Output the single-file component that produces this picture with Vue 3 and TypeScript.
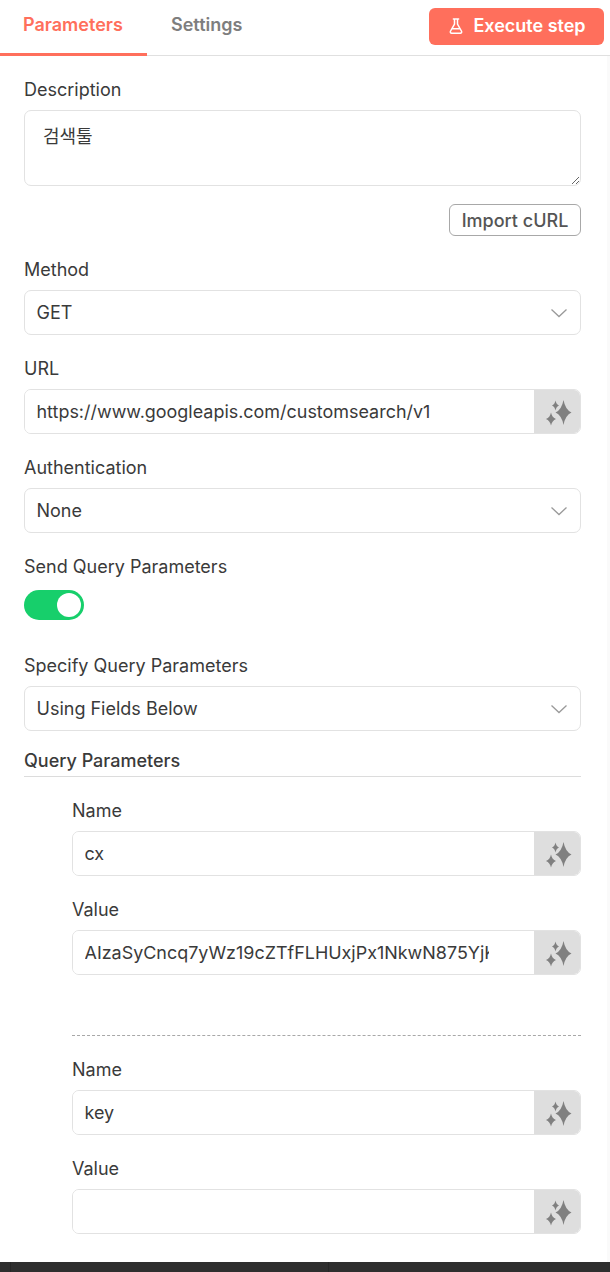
<script setup lang="ts">
interface Param {
  name: string
  value: string
}

const params: Param[] = [
  { name: 'cx', value: 'AIzaSyCncq7yWz19cZTfFLHUxjPx1NkwN875YjKlmQ8' },
  { name: 'key', value: '' },
]

const sparkle =
  'M24 4.500Q25.800 14.200 32 17Q25.800 19.800 24 29.500Q22.200 19.800 16 17Q22.200 14.200 24 4.500ZM16 5Q16.800 9 19.500 10Q16.800 11 16 15Q15.200 11 12.500 10Q15.200 9 16 5ZM11.500 17Q12.600 22 16.500 23.500Q12.600 25 11.500 30Q10.400 25 6.500 23.500Q10.400 22 11.500 17Z'
</script>

<template>
  <div class="page">
    <header class="tabs">
      <div class="tab tab_active">Parameters</div>
      <div class="tab">Settings</div>
      <button class="execute">
        <svg width="18" height="18" viewBox="0 0 24 24" fill="none" stroke="#fff" stroke-width="2" stroke-linecap="round" stroke-linejoin="round">
          <path d="M8.500 2.500h7M10 2.500v7L4.600 19a1.700 1.700 0 0 0 1.500 2.500h11.800a1.700 1.700 0 0 0 1.500-2.500L14 9.500v-7M7 15.500h10" />
        </svg>
        Execute step
      </button>
    </header>

    <main class="body">
      <div class="form">
        <label class="label">Description</label>
        <textarea class="area" readonly>검색툴</textarea>
        <div class="curl_row"><button class="curl">Import cURL</button></div>

        <label class="label next">Method</label>
        <div class="select">GET
          <svg class="chev" width="18" height="10" viewBox="0 0 18 10" fill="none" stroke="#9a9a9a" stroke-width="1.300"><path d="M1.500 1.500 9 8.500l7.500-7" /></svg>
        </div>

        <label class="label next">URL</label>
        <div class="field">
          <input class="input" readonly value="https://www.googleapis.com/customsearch/v1" />
          <div class="magic"><svg width="32" height="32" viewBox="1.500 0.500 32 32" fill="#808080"><path :d="sparkle" /></svg></div>
        </div>

        <label class="label next">Authentication</label>
        <div class="select">None
          <svg class="chev" width="18" height="10" viewBox="0 0 18 10" fill="none" stroke="#9a9a9a" stroke-width="1.300"><path d="M1.500 1.500 9 8.500l7.500-7" /></svg>
        </div>

        <label class="label next">Send Query Parameters</label>
        <div class="toggle"><span class="knob"></span></div>

        <label class="label specify">Specify Query Parameters</label>
        <div class="select">Using Fields Below
          <svg class="chev" width="18" height="10" viewBox="0 0 18 10" fill="none" stroke="#9a9a9a" stroke-width="1.300"><path d="M1.500 1.500 9 8.500l7.500-7" /></svg>
        </div>

        <div class="section">Query Parameters</div>

        <div class="params">
          <div v-for="(p, i) in params" :key="p.name" class="param" :class="{ param_next: i > 0 }">
            <label class="label">Name</label>
            <div class="field">
              <input class="input" readonly :value="p.name" />
              <div class="magic"><svg width="32" height="32" viewBox="1.500 0.500 32 32" fill="#808080"><path :d="sparkle" /></svg></div>
            </div>
            <label class="label next">Value</label>
            <div class="field">
              <input class="input" readonly :value="p.value" />
              <div class="magic"><svg width="32" height="32" viewBox="1.500 0.500 32 32" fill="#808080"><path :d="sparkle" /></svg></div>
            </div>
          </div>
        </div>
      </div>
      <div class="scroll"></div>
    </main>

    <footer class="footer">
      <div class="foot_a"></div>
      <div class="foot_b"></div>
    </footer>
  </div>
</template>

<style scoped>
.page {
  width: 610px;
  height: 1272px;
  display: flex;
  flex-direction: column;
  font-family: Inter, "Noto Sans CJK KR", sans-serif;
  font-size: 18px;
  color: #3a3a3a;
  background: #fff;
  overflow: hidden;
}
.tabs {
  height: 55px;
  flex: none;
  display: flex;
  border-bottom: 1px solid #e0e0e0;
}
.tab {
  box-sizing: border-box;
  padding: 14px 0 0 24px;
  font-weight: 600;
  font-size: 18px;
  line-height: 21px;
  color: #7e7e7e;
  flex: 1;
}
.tab_active {
  flex: none;
  width: 147px;
  padding-left: 23px;
  height: 56px;
  color: #ff6f5c;
  border-bottom: 3px solid #ff6f5c;
}
.execute {
  align-self: flex-start;
  margin: 8px 6px 0 0;
  width: 175px;
  height: 37px;
  border: none;
  border-radius: 6px;
  background: #ff6f5c;
  color: #fff;
  font: 600 18px Inter, sans-serif;
  display: flex;
  align-items: center;
  justify-content: center;
  gap: 8px;
  padding: 0 0 2px;
}
.body {
  flex: 1;
  display: flex;
  min-height: 0;
}
.form {
  width: 557px;
  margin-left: 24px;
  padding-top: 23px;
}
.scroll {
  width: 3px;
  margin-left: 26px;
  background: #fafafa;
}
.label {
  display: block;
  height: 21px;
  line-height: 21px;
  margin-bottom: 10px;
  font-size: 18px;
}
.next {
  margin-top: 23px;
}
.specify {
  margin-top: 35px;
}
.area {
  display: block;
  width: 100%;
  height: 76px;
  box-sizing: border-box;
  padding: 11px 18px;
  border: 1.500px solid #e2e2e2;
  border-radius: 7px;
  font: 18px Inter, "Noto Sans CJK KR", sans-serif;
  color: #3a3a3a;
  outline: none;
}
.curl_row {
  display: flex;
  justify-content: flex-end;
  margin-top: 18px;
}
.curl {
  width: 132px;
  height: 32px;
  border: 1px solid #a8a8a8;
  border-radius: 6px;
  background: #fff;
  color: #555;
  font: 500 18px Inter, sans-serif;
  padding: 0;
}
.select {
  height: 45px;
  box-sizing: border-box;
  display: flex;
  align-items: center;
  justify-content: space-between;
  padding: 0 12px 0 11.500px;
  border: 1.500px solid #e2e2e2;
  border-radius: 7px;
}
.chev {
  flex: none;
}
.field {
  height: 45px;
  display: flex;
  box-sizing: border-box;
  border: 1.500px solid #e2e2e2;
  border-radius: 7px;
  overflow: hidden;
}
.input {
  flex: 1;
  min-width: 0;
  border: none;
  outline: none;
  padding: 0 45px 0 11.500px;
  font: 17.960px Inter, sans-serif;
  color: #3a3a3a;
  background: #fff;
}
.magic {
  width: 46px;
  flex: none;
  display: flex;
  align-items: center;
  justify-content: center;
  background: #dedede;
}
.toggle {
  width: 60px;
  height: 30px;
  border-radius: 15px;
  background: #17cf6b;
  display: flex;
  justify-content: flex-end;
  align-items: center;
  padding-right: 3px;
  box-sizing: border-box;
  margin-top: 13px;
}
.knob {
  width: 24px;
  height: 24px;
  border-radius: 50%;
  background: #fff;
}
.section {
  margin-top: 19px;
  height: 26px;
  line-height: 21px;
  font-weight: 500;
  border-bottom: 1px solid #dcdcdc;
}
.params {
  padding: 23px 0 0 48px;
}
.param_next {
  margin-top: 60px;
  padding-top: 23px;
  border-top: 1px dashed #a8a8a8;
}
.footer {
  height: 10px;
  flex: none;
  display: flex;
  background: #2e2e2e;
}
.foot_a {
  width: 10px;
  border-right: 1px solid #262626;
}
.foot_b {
  width: 317px;
  border-right: 1px solid #262626;
}
</style>

<style>
body {
  margin: 0;
}
</style>
